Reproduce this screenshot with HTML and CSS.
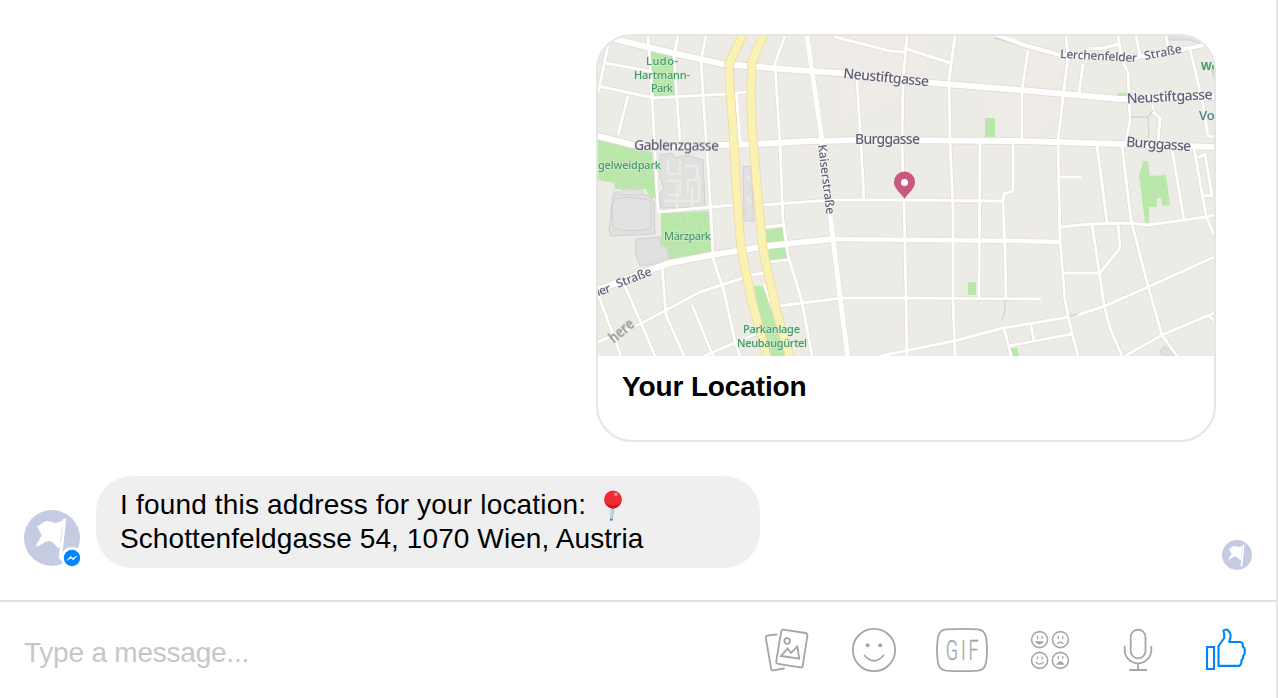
FILE: index.html
```html
<!DOCTYPE html>
<html lang="en">
<head>
<meta charset="utf-8">
<title>Chat</title>
<link rel="stylesheet" href="styles.css">
</head>
<body>
<svg class="defs" aria-hidden="true">
  <symbol id="flag" viewBox="0 0 56 56">
    <circle cx="28" cy="28" r="28" fill="#c5cbe3"/>
    <path d="M13 16.200C17 15.500 19 11 23 11C27 11 29 13.700 33 12.700L39 10.500L35.500 38C32 38 29.500 31 25 31C20 31 17 36.500 11.500 36.500L17.700 25.500Z" fill="#fff"/>
    <path d="M40.500 10L36.300 48" stroke="#fff" stroke-width="3.200" stroke-linecap="round"/>
    <path d="M38.500 17L37 31" stroke="#dfe2ee" stroke-width="1"/>
  </symbol>
</svg>
<div class="chat">
  <main class="messages">
    <div class="row row-out">
      <article class="card">
        <svg class="map" viewBox="598 36 616 320">
          <rect x="590" y="28" width="632" height="336" fill="#edebe6"/>
          <g fill="#efebe6">
            <path d="M850 36H925V78L820 69L815 36Z M838 83L900 88L890 105L838 117Z M985 90L1060 95V112L1040 135H990Z M1026 50L1062 58L1056 88L1022 84Z"/>
          </g>
          <g fill="#b9e8aa">
            <path d="M650 50L674 56L675 96L654 97Z M598 139L634 147L652 152L656 198L650 198L646 189L615 189L614 183L598 180Z"/>
            <path d="M661 213L709 211L712 253L670 261L667 248L661 246Z M765 230L785 227L785 241L766 243Z M768 249L786 247L787 260L770 262Z M754 286H764L789 356H765Z"/>
            <path d="M985 118H995V137H985Z M968 282H976V295H968Z M1142 166L1143 161H1148L1150 176L1166 175L1170 205L1162 206L1161 198H1157V207H1149L1149 222L1145 223L1139 174Z"/>
            <path d="M1118 93H1126V97H1118Z M1211 70L1214 67V80Z M1009 348H1017L1019 356H1011Z"/>
          </g>
          <g stroke="#c4d8bb" stroke-width="1" fill="none">
            <path d="M604 145Q608 160 617 165Q624 190 641 184Q650 165 640 150 M617 165Q623 155 640 166 M685 214L682 235L692 247L709 254 M683 217L701 225L707 213 M701 225L694 245 M666 236L674 258 M675 238L672 253"/>
          </g>
          <g fill="#e0e0df" stroke="#d0d0d2" stroke-width="1">
            <path d="M613 194L648 195L654 201L655 234L611 236L609 230Z M636 239L660 237L661 248L668 248V262L653 264L640 266L635 252Z M613 192L622 192V189H642L643 194"/>
            <path d="M660 155L672 153L674 158L688 155L703 160L705 207L661 208L659 194L664 188L660 178Z M743 167L751 166L754 221H744Z"/>
            <path d="M1168 35H1199V43L1189 40H1168Z M1160 351L1165 346L1174 354V356H1162Z"/>
          </g>
          <path d="M614 199Q631 195 651 201V228Q632 234 614 228Q610 213 614 199Z" fill="#e2e2e3" stroke="#cfcfd3"/>
          <g stroke="#eceae6" stroke-width="2.500" fill="none">
            <path d="M668 160V174H680V161 M669 181H680V195H668 M685 166H697V180H688V194 M664 201H701 M677 185V208 M692 186V207 M699 175V201 M746 175L750 180 M746 198L751 203"/>
          </g>
          <g fill="none" stroke-linejoin="round">
            <g stroke="#ddd9cf">
              <g stroke-width="4">
                <path d="M608 46L600 84L598 92 M605 63L649 71 M598 86L654 98L727 94L747 92 M628 96L618 135 M648 36L652 98L655 152L658 212 M678 36L674 56L680 142 M706 36L701 60L703 95L709 180L713 253 M785 36L775 63L780 145L783 220L788 255L802 302L812 356"/>
                <path d="M658 212L733 205 M762 205L832 200L904 200L1002 201 M764 227L785 225 M769 262L788 260 M598 342L640 324L700 292L752 275L764 273 M662 266L666 315L684 356 M624 284L641 323L655 356 M598 294L621 356 M712 255L724 292L735 341L740 356 M692 305L713 356 M704 356L765 330 M779 306L802 303L841 298L906 298L1041 299 M764 284L778 324"/>
                <path d="M835 37L890 51L904 52 M907 36L903 80L902 145L904 200L906 298L907 356 M955 36L949 80L950 140L953 210L953 300L955 356 M904 48L950 63 M857 80L861 145L864 201 M980 140L979 297 M1013 142V191L1004 194L1003 203L1005 250L1006 299"/>
                <path d="M1028 50L1022 90V139 M1066 36L1068 56L1058 140L1060 240L1065 300L1070 325L1078 356 M1083 64L1079 93 M1089 49L1104 48L1119 44 M1118 36L1122 61L1128 72L1130 120L1126 142 M1136 36L1140 56 M1166 36L1168 48 M1190 49L1203 104L1208 136L1214 137 M1153 105V112L1160 118L1158 142 M1059 177H1081"/>
                <path d="M1097 146L1107 222 M1122 146L1131 220L1148 286L1162 335L1177 356 M1172 149L1184 220 M1194 148L1206 216L1214 235 M1198 158L1205 154L1212 196L1203 195 M1060 227L1091 224L1130 223L1148 225L1206 217L1214 215 M1092 224L1104 305L1110 328L1122 356 M1118 225L1120 248L1100 273H1063 M1078 315L1105 306L1148 287L1214 257 M1125 356L1162 335L1214 313 M1208 315L1214 321"/>
                <path d="M880 356L954 341L1003 328L1069 317 M1004 328L1011 356 M1008 346L1072 334 M1031 325L1034 341"/>
              </g>
              <g stroke-width="7.500">
                <path d="M598 35L618 40L673 53L723 64L757 67L810 71L840 73L933 83L1020 90L1120 99L1214 97 M598 136L633 145L680 147L723 145L757 144L810 141L867 140L1020 141L1122 144L1214 147 M598 290L653 269L670 263L712 255L737 251L767 246L833 239"/>
              </g>
              <path stroke-width="5.800" d="M807 36L812 71L822 140L830 213L840 297L848 358"/>
              <path stroke-width="5.500" d="M995 36L1024 45L1060 55L1120 59L1160 54L1214 43 M833 239L1020 241L1060 242"/>
            </g>
            <g stroke="#fff">
              <g stroke-width="2.900">
                <path d="M608 46L600 84L598 92 M605 63L649 71 M598 86L654 98L727 94L747 92 M628 96L618 135 M648 36L652 98L655 152L658 212 M678 36L674 56L680 142 M706 36L701 60L703 95L709 180L713 253 M736 94L740 143 M785 36L775 63L780 145L783 220L788 255L802 302L812 356"/>
                <path d="M658 212L733 205 M762 205L832 200L904 200L1002 201 M764 227L785 225 M769 262L788 260 M598 342L640 324L700 292L752 275L764 273 M662 266L666 315L684 356 M624 284L641 323L655 356 M598 294L621 356 M712 255L724 292L735 341L740 356 M692 305L713 356 M704 356L765 330 M779 306L802 303L841 298L906 298L1041 299 M764 284L778 324"/>
                <path d="M835 37L890 51L904 52 M907 36L903 80L902 145L904 200L906 298L907 356 M955 36L949 80L950 140L953 210L953 300L955 356 M904 48L950 63 M857 80L861 145L864 201 M980 140L979 297 M1013 142V191L1004 194L1003 203L1005 250L1006 299"/>
                <path d="M1028 50L1022 90V139 M1066 36L1068 56L1058 140L1060 240L1065 300L1070 325L1078 356 M1083 64L1079 93 M1089 49L1104 48L1119 44 M1118 36L1122 61L1128 72L1130 120L1126 142 M1136 36L1140 56 M1166 36L1168 48 M1190 49L1203 104L1208 136L1214 137 M1153 105V112L1160 118L1158 142 M1059 177H1081"/>
                <path d="M1097 146L1107 222 M1122 146L1131 220L1148 286L1162 335L1177 356 M1172 149L1184 220 M1194 148L1206 216L1214 235 M1198 158L1205 154L1212 196L1203 195 M1060 227L1091 224L1130 223L1148 225L1206 217L1214 215 M1092 224L1104 305L1110 328L1122 356 M1118 225L1120 248L1100 273H1063 M1078 315L1105 306L1148 287L1214 257 M1125 356L1162 335L1214 313 M1208 315L1214 321"/>
                <path d="M880 356L954 341L1003 328L1069 317 M1004 328L1011 356 M1008 346L1072 334 M1031 325L1034 341"/>
              </g>
              <path stroke-width="6.200" d="M598 35L618 40L673 53L723 64L757 67L810 71L840 73L933 83L1020 90L1120 99L1214 97 M598 136L633 145L680 147L723 145L757 144L810 141L867 140L1020 141L1122 144L1214 147 M598 290L653 269L670 263L712 255L737 251L767 246L833 239"/>
              <path stroke-width="5" d="M807 36L812 71L822 140L830 213L840 297L848 358"/>
              <path stroke-width="4.300" d="M992 33L1024 45L1060 55L1120 59L1160 54L1214 43 M833 239L1020 241L1060 242"/>
            </g>
            <path stroke="#d4d4d2" stroke-width="1.300" d="M1131 117H1148L1149 138 M1148 117L1153 110 M1005 300Q1006 312 1002 319 M1069 316L1077 314"/>
            <path stroke="#efd9a0" stroke-width="9.200" d="M743 34L729 64L730 90L733 128L737 198L741 247L751 297L767 358 M764 34L752 62L751 90L752 128L758 198L763 250L777 313L790 358"/>
            <path stroke="#faf2b2" stroke-width="7.600" d="M743 34L729 64L730 90L733 128L737 198L741 247L751 297L767 358 M764 34L752 62L751 90L752 128L758 198L763 250L777 313L790 358"/>
          </g>
          <g class="street">
            <text x="843" y="78" textLength="86" transform="rotate(5.500 843 78)">Neustiftgasse</text>
            <text x="1127" y="103.500" textLength="86" transform="rotate(-3 1127 104)">Neustiftgasse</text>
            <text x="855" y="144" textLength="65">Burggasse</text>
            <text x="1126" y="146.500" textLength="65" transform="rotate(4 1126 146)">Burggasse</text>
            <text x="634" y="149.500" textLength="85" transform="rotate(.5 634 149)">Gablenzgasse</text>
            <text class="small" x="1060" y="58" textLength="77" transform="rotate(3 1060 58)">Lerchenfelder</text>
            <text class="small" x="1145" y="60" textLength="38" transform="rotate(-11 1145 60)">Straße</text>
            <text class="small" x="818" y="145" textLength="70" transform="rotate(83 818 145)">Kaiserstraße</text>
            <text class="small" x="598" y="296" textLength="14" transform="rotate(-18 598 296)">ier</text>
            <text class="small" x="618" y="288" textLength="37" transform="rotate(-21 618 288)">Straße</text>
          </g>
          <g class="park">
            <text x="646" y="65" textLength="32">Ludo-</text>
            <text x="634" y="78.500" textLength="56">Hartmann-</text>
            <text x="651" y="92" textLength="22">Park</text>
            <text x="598" y="168.500" textLength="63">gelweidpark</text>
            <text x="664" y="239.500" textLength="47">Märzpark</text>
            <text x="743" y="333" textLength="57">Parkanlage</text>
            <text x="737" y="346.500" textLength="70">Neubaugürtel</text>
            <text class="strong" x="1201" y="70">We</text>
            <text class="place" x="1199" y="120">Vo</text>
          </g>
          <text class="here" x="614" y="344" textLength="28" lengthAdjust="spacingAndGlyphs" transform="rotate(-40 614 344)">here</text>
          <path d="M904.500 199C901 193 894 189 894 182A10.500 10.500 0 0 1 915 182C915 189 908 193 904.500 199Z" fill="#c9577f"/>
          <circle cx="904.500" cy="182.500" r="3.500" fill="#fff"/>
        </svg>
        <h2 class="card-title">Your Location</h2>
      </article>
    </div>
    <div class="row row-in">
      <div class="avatar">
        <svg class="avatar-img"><use href="#flag"/></svg>
        <svg class="badge" viewBox="0 0 22 22"><circle cx="11" cy="11" r="11" fill="#fff"/><circle cx="11" cy="11" r="8.200" fill="#0084ff"/><path d="M6 13.300L9.700 9.300L11.900 11.300L16 9L12.300 13L10.100 11Z" fill="#fff" stroke="#fff" stroke-width=".5"/></svg>
      </div>
      <div class="bubble">
        <div class="line line-one">I found this address for your location:
          <svg class="pin" viewBox="0 0 20 34"><path d="M8.300 18H11.400L9.800 31.500Q8.200 33.200 7 31.500Z" fill="#9dbccb"/><path d="M9.400 19L8.400 30.500" stroke="#d7e6ed" stroke-width="1"/><ellipse cx="8.400" cy="31.700" rx="1.700" ry="1" fill="#708791"/><circle cx="10" cy="11.500" r="8.900" fill="#f02c30"/><path d="M2 15Q10 20 18 15Q15 20.500 10 20.400Q5 20.500 2 15Z" fill="#c8171d"/><circle cx="12.800" cy="6.500" r="2" fill="#ff7b7b"/></svg>
        </div>
        <div class="line line-two">Schottenfeldgasse 54, 1070 Wien, Austria</div>
      </div>
      <svg class="seen"><use href="#flag"/></svg>
    </div>
  </main>
  <footer class="composer">
    <div class="placeholder">Type a message...</div>
    <svg class="tools" viewBox="760 620 496 60" fill="none" stroke="#a6a6a6" stroke-width="1.800" stroke-linejoin="round" stroke-linecap="round">
      <path d="M776.500 634.500L767 635.700Q765.500 636 765.700 637.500L771.200 669Q771.500 670.700 773 670.300L784 668.500"/>
      <path d="M783.500 629.700L805.500 633Q807.700 633.300 807.400 635.500L802.800 665.500Q802.500 667.600 800.400 667.300L778 663.800Q775.900 663.500 776.200 661.400L781.200 631.500Q781.500 629.400 783.500 629.700Z"/>
      <circle cx="787.200" cy="641" r="2.800"/>
      <path stroke-linejoin="miter" d="M781 656L787.500 648.500L791 653L797.300 646.500L799.300 658.700Z"/>
      <circle cx="874" cy="650" r="21.200"/><circle cx="867.700" cy="645.200" r="2" fill="#a6a6a6" stroke="none"/><circle cx="880.200" cy="645.200" r="2" fill="#a6a6a6" stroke="none"/>
      <path d="M864.500 655.500Q874 666 883.500 655.500"/>
      <path d="M946 629.400Q962 628.300 978 629.400Q984.500 630 986 637Q988 650 986 663Q984.500 670 978 670.600Q962 671.700 946 670.600Q939.500 670 938 663Q936 650 938 637Q939.500 630 946 629.400Z"/>
      <text class="gif" transform="translate(945.800 660) scale(.64 1)">GIF</text>
      <g stroke-width="1.600">
        <circle cx="1039.600" cy="639.600" r="8"/><circle cx="1060.400" cy="639.600" r="8"/><circle cx="1039.600" cy="660.400" r="8"/><circle cx="1060.400" cy="660.400" r="8"/>
        <path d="M1037.500 636.500V638.500 M1042 636.500V638.500 M1058.200 636.500V638.500 M1062.700 636.500V638.500 M1037.500 657V659 M1042 657V659 M1058.200 656.500V658.500 M1062.700 656.500V658.500" stroke-width="1.300"/>
        <path d="M1035.800 641.800H1043.400Q1039.600 646.500 1035.800 641.800Z M1057 664.200H1063.800Q1060.400 659 1057 664.200Z" fill="#a6a6a6" stroke-width="1"/>
        <path d="M1057.800 643.500Q1060.400 641 1063 643.500 M1035.800 662.300Q1039.600 666 1043.400 662.300" stroke-width="1.200"/>
      </g>
      <rect x="1130.700" y="629.700" width="14.800" height="28.600" rx="7.400"/>
      <path stroke-linecap="butt" d="M1124.700 646V650A13.300 13.300 0 0 0 1151.300 650V646 M1138 663.500V670 M1129.200 670H1147"/>
      <g stroke="#0084ff" stroke-width="2.100" stroke-linejoin="miter">
        <path d="M1207 647H1214V669H1207Z"/>
        <path stroke-linejoin="round" d="M1218.500 665.900V646.200L1224.200 638Q1224.800 634 1223.400 630.800Q1225.500 628.500 1228 630.200Q1231 633 1230.500 637L1229.200 642H1240.500Q1243.500 642.500 1242.700 646.400Q1245.500 648 1244.700 651.500Q1245.200 654 1243.200 655.500Q1243.700 658.500 1241.500 660Q1242 664 1239.500 665.900Z"/>
      </g>
    </svg>
  </footer>
</div>
</body>
</html>
```

FILE: styles.css
```css
* { box-sizing: border-box; }
body {
  margin: 0;
  background: #fff;
  color: #000;
  font-family: "Liberation Sans", Arial, sans-serif;
}
.defs { position: absolute; width: 0; height: 0; }
.chat {
  display: flex;
  flex-direction: column;
  height: 698px;
  border-right: 2px solid #e5e5e5;
  overflow: hidden;
}
.messages {
  display: flex;
  flex-direction: column;
  gap: 34px;
  height: 600px;
  padding: 34px 24px 0;
}
.row { display: flex; }
.row-out { justify-content: flex-end; padding-right: 36px; }
.card {
  width: 620px;
  height: 408px;
  border: 2px solid #e5e5e5;
  border-radius: 36px;
  overflow: hidden;
}
.map { display: block; width: 616px; height: 320px; }
.map > * { filter: blur(.35px); }
.map text { font-family: "Noto Sans", sans-serif; paint-order: stroke; stroke-linejoin: round; }
.street text { font-size: 14px; font-weight: 500; fill: #625f79; stroke: #f3f1ee; stroke-width: 1.5px; }
.street .small { font-size: 12px; }
.park text { font-size: 11px; font-weight: 500; fill: #459a6c; stroke: #dcecd4; stroke-width: 1px; }
.park .strong { font-weight: 700; }
.park .place { font-size: 13px; fill: #557d8c; }
.map .here { font-size: 16px; font-weight: 700; fill: #a09f9d; }
.card-title {
  margin: 0;
  padding: 14px 24px;
  font-size: 28px;
  line-height: 34px;
  letter-spacing: -.12px;
}
.row-in { align-items: flex-end; }
.avatar { position: relative; width: 56px; height: 56px; margin: 0 16px 2px 0; }
.avatar-img { display: block; width: 56px; height: 56px; }
.badge { position: absolute; right: -3px; bottom: -3px; width: 22px; height: 22px; }
.bubble {
  width: 664px;
  height: 92px;
  padding: 12px 24px;
  border-radius: 36px;
  background: #efefef;
  font-size: 28px;
  line-height: 34px;
  white-space: nowrap;
}
.line { display: flex; height: 34px; }
.line-one { letter-spacing: .18px; }
.line-two { letter-spacing: .09px; }
.pin { width: 20px; height: 34px; margin-left: 17px; }
.seen { width: 30px; height: 30px; margin: 0 0 -2px auto; }
.composer {
  display: flex;
  align-items: flex-start;
  justify-content: space-between;
  height: 98px;
  padding: 18px 20px 0 24px;
  border-top: 2px solid #e2e2e2;
}
.placeholder { padding-top: 16px; color: #c7c7c7; font-size: 28px; line-height: 34px; letter-spacing: -.22px; }
.tools { width: 496px; height: 60px; }
.gif { font-family: Roboto, sans-serif; font-size: 28px; font-weight: 300; letter-spacing: 4.5px; fill: #a6a6a6; stroke: #a6a6a6; stroke-width: .3px; }
```
